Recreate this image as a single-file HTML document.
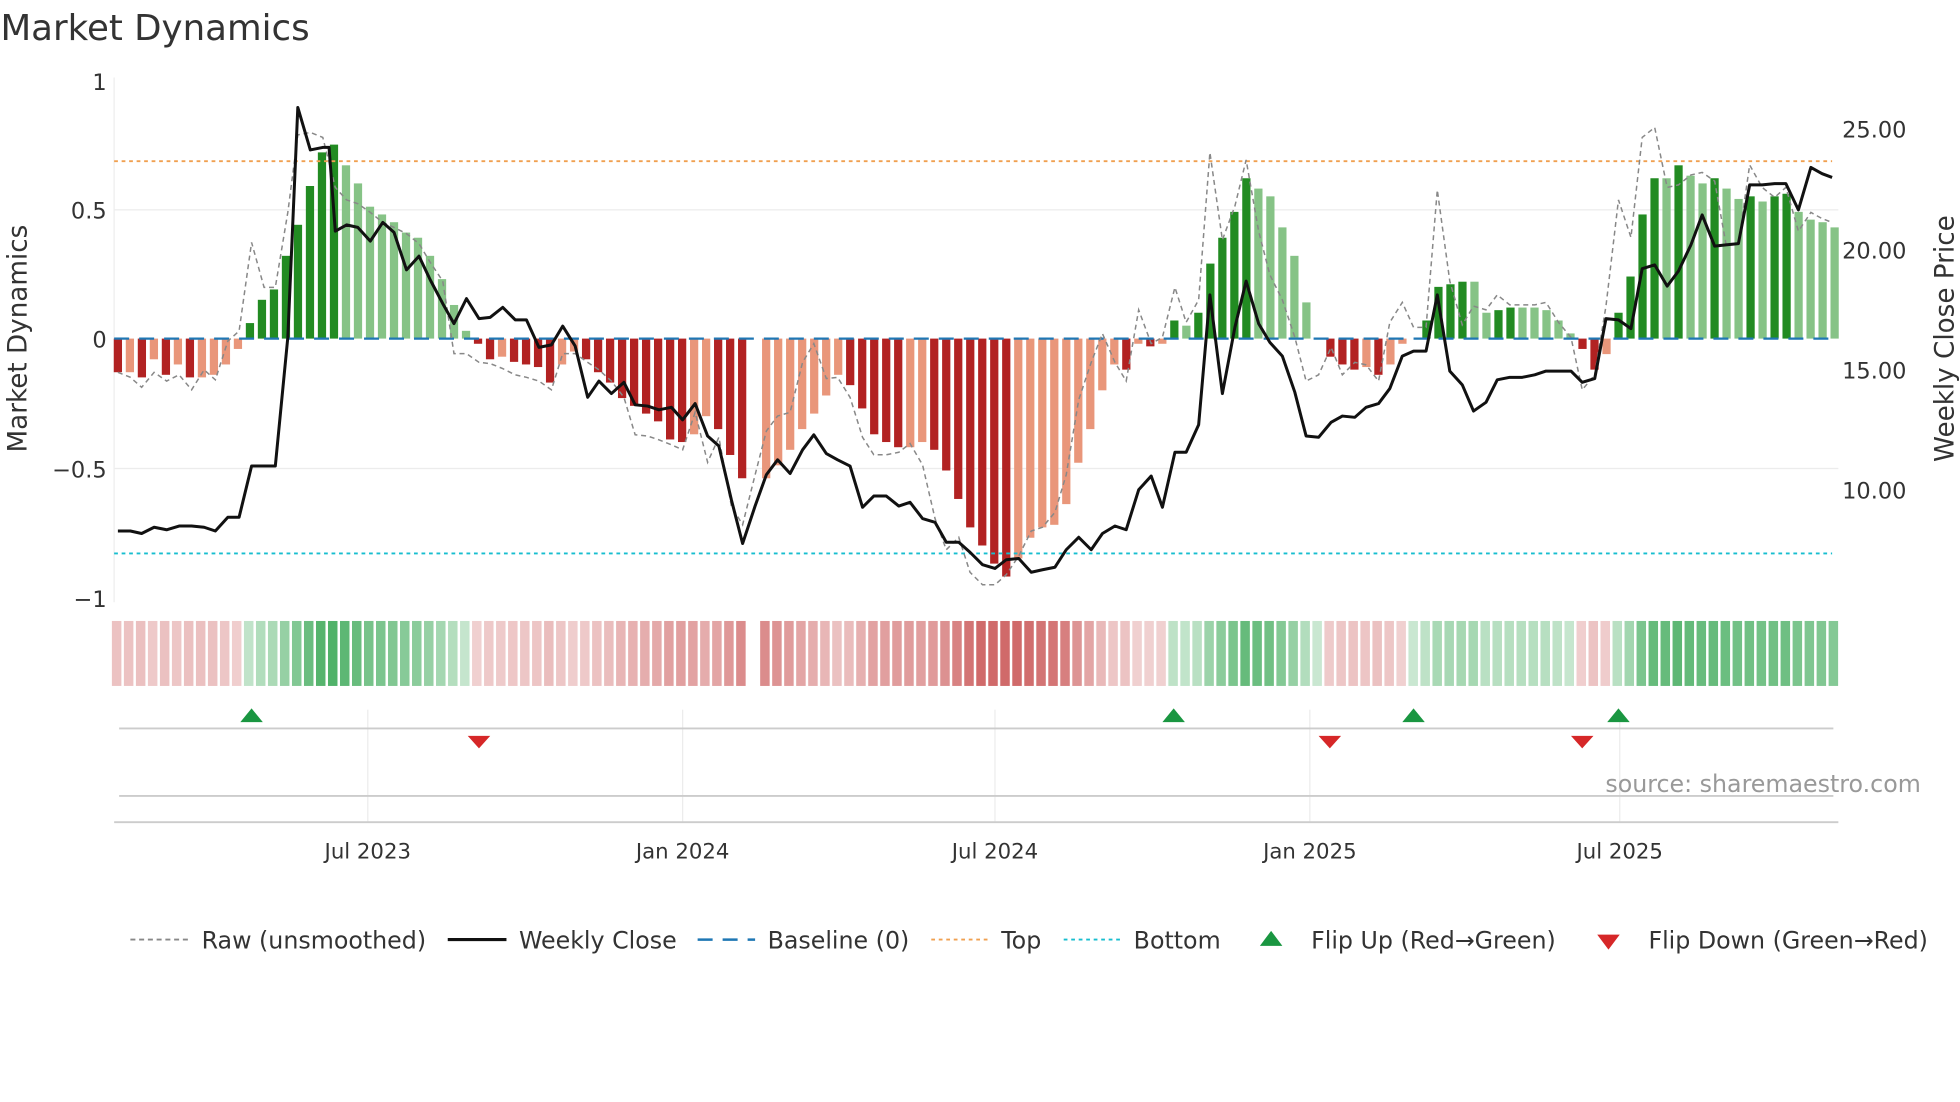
<!DOCTYPE html>
<html><head><meta charset="utf-8"><style>
html,body{margin:0;padding:0;background:#fff;}
svg{display:block;font-family:"DejaVu Sans","Liberation Sans",sans-serif;}
</style></head><body>
<svg id="s" width="1960" height="1102" viewBox="0 0 1568 882" xmlns="http://www.w3.org/2000/svg">
<rect width="1568" height="882" fill="#fff"/>
<text x="0" y="32" font-size="28.5" fill="#333">Market Dynamics</text>
<g stroke="#ececec" stroke-width="1">
<line x1="91" y1="168" x2="1471" y2="168"/><line x1="91" y1="375" x2="1471" y2="375"/>
<line x1="294" y1="568" x2="294" y2="658"/><line x1="546" y1="568" x2="546" y2="658"/><line x1="796" y1="568" x2="796" y2="658"/><line x1="1048" y1="568" x2="1048" y2="658"/><line x1="1296" y1="568" x2="1296" y2="658"/>
</g>
<line x1="91" y1="62" x2="91" y2="482" stroke="#eee"/>
<g id="bars"></g>
<g id="strip"></g>
<line x1="91" y1="271" x2="1471" y2="271" stroke="#1f77b4" stroke-width="1.8" stroke-dasharray="12,8"/>
<line x1="91" y1="129" x2="1466" y2="129" stroke="#f0a050" stroke-width="1.5" stroke-dasharray="3,3"/>
<line x1="91" y1="443" x2="1466" y2="443" stroke="#17becf" stroke-width="1.5" stroke-dasharray="3,3"/>
<path id="raw" fill="none" stroke="#888" stroke-width="1.2" stroke-dasharray="4,3"/>
<path id="px" fill="none" stroke="#111" stroke-width="2.4" stroke-linejoin="round"/>
<g font-size="18" fill="#333" text-anchor="end">
<text x="85" y="72">1</text><text x="85" y="175">0.5</text><text x="85" y="278">0</text><text x="85" y="382">−0.5</text><text x="85" y="486">−1</text>
</g>
<g font-size="18" fill="#333">
<text x="1474" y="110">25.00</text><text x="1474" y="207">20.00</text><text x="1474" y="303">15.00</text><text x="1474" y="399">10.00</text>
</g>
<text transform="translate(21,271) rotate(-90)" font-size="21" fill="#333" text-anchor="middle">Market Dynamics</text>
<text transform="translate(1563,271) rotate(-90)" font-size="21" fill="#333" text-anchor="middle">Weekly Close Price</text>
<line x1="95" y1="583" x2="1467" y2="583" stroke="#ccc" stroke-width="1.5"/>
<line x1="95" y1="637" x2="1467" y2="637" stroke="#ccc" stroke-width="1.5"/>
<line x1="91" y1="658" x2="1471" y2="658" stroke="#ccc" stroke-width="1.5"/>
<g fill="#1a9641">
<path d="M192,578 L201,567 L210,578Z"/><path d="M930,578 L939,567 L948,578Z"/><path d="M1122,578 L1131,567 L1140,578Z"/><path d="M1286,578 L1295,567 L1304,578Z"/>
</g>
<g fill="#d62728">
<path d="M374,589 L392,589 L383,599Z"/><path d="M1055,589 L1073,589 L1064,599Z"/><path d="M1257,589 L1275,589 L1266,599Z"/>
</g>
<text x="1537" y="634" font-size="19" fill="#999" text-anchor="end">source: sharemaestro.com</text>
<g font-size="17" fill="#333" text-anchor="middle">
<text x="294" y="687">Jul 2023</text><text x="546" y="687">Jan 2024</text><text x="796" y="687">Jul 2024</text><text x="1048" y="687">Jan 2025</text><text x="1296" y="687">Jul 2025</text>
</g>
<g font-size="19" fill="#333">
<line x1="104" y1="752" x2="150" y2="752" stroke="#888" stroke-width="1.5" stroke-dasharray="4,3"/>
<text x="161" y="759">Raw (unsmoothed)</text>
<line x1="358" y1="752" x2="405" y2="752" stroke="#111" stroke-width="2.5"/>
<text x="415" y="759">Weekly Close</text>
<line x1="558" y1="752" x2="604" y2="752" stroke="#1f77b4" stroke-width="2" stroke-dasharray="12,8"/>
<text x="614" y="759">Baseline (0)</text>
<line x1="745" y1="752" x2="791" y2="752" stroke="#f0a050" stroke-width="1.5" stroke-dasharray="3,3"/>
<text x="801" y="759">Top</text>
<line x1="851" y1="752" x2="897" y2="752" stroke="#17becf" stroke-width="1.5" stroke-dasharray="3,3"/>
<text x="907" y="759">Bottom</text>
<path d="M1008,757 L1017,745 L1026,757Z" fill="#1a9641"/>
<text x="1049" y="759">Flip Up (Red→Green)</text>
<path d="M1278,748 L1296,748 L1287,760Z" fill="#d62728"/>
<text x="1319" y="759">Flip Down (Green→Red)</text>
</g>
</svg>
<script>
var V=[-0.13,-0.13,-0.15,-0.08,-0.14,-0.1,-0.15,-0.15,-0.14,-0.1,-0.04,0.06,0.15,0.19,0.32,0.44,0.59,0.72,0.75,0.67,0.6,0.51,0.48,0.45,0.41,0.39,0.32,0.23,0.13,0.03,-0.02,-0.08,-0.07,-0.09,-0.1,-0.11,-0.17,-0.1,-0.05,-0.08,-0.13,-0.17,-0.23,-0.26,-0.29,-0.32,-0.39,-0.4,-0.37,-0.3,-0.35,-0.45,-0.54,null,-0.54,-0.49,-0.43,-0.35,-0.29,-0.22,-0.14,-0.18,-0.27,-0.37,-0.4,-0.42,-0.42,-0.4,-0.43,-0.51,-0.62,-0.73,-0.8,-0.87,-0.92,-0.85,-0.77,-0.73,-0.72,-0.64,-0.48,-0.35,-0.2,-0.1,-0.12,-0.02,-0.03,-0.02,0.07,0.05,0.1,0.29,0.39,0.49,0.62,0.58,0.55,0.43,0.32,0.14,0,-0.07,-0.1,-0.12,-0.11,-0.14,-0.1,-0.02,0,0.07,0.2,0.21,0.22,0.22,0.1,0.11,0.12,0.12,0.12,0.11,0.07,0.02,-0.04,-0.12,-0.06,0.1,0.24,0.48,0.62,0.62,0.67,0.63,0.6,0.62,0.58,0.54,0.55,0.53,0.55,0.56,0.49,0.46,0.45,0.43];
var n=V.length,x0=94,x1=1468,st=(x1-x0)/(n-1),b="",s="",prev=0;
for(var i=0;i<n;i++){var v=V[i];if(v===null){continue;}var x=x0+i*st,y=271-v*207;
var c;if(v>=0)c=(v>prev)?"#228b22":"#86c386";else c=(v<prev)?"#b22222":"#e9967a";prev=v;
b+='<rect x="'+(x-3.3)+'" y="'+Math.min(y,271)+'" width="6.6" height="'+Math.abs(271-y)+'" fill="'+c+'"/>';
var a=0.25+0.6*Math.min(1,Math.abs(v)/0.8);var col=v>=0?"rgba(40,160,70,"+a+")":"rgba(200,80,80,"+a+")";
s+='<rect x="'+(x-4.8)+'" y="497" width="7.6" height="52" fill="'+col+'"/>';}
document.getElementById("bars").innerHTML=b;document.getElementById("strip").innerHTML=s;
var P="94,425 104,425 113,427 123,422 133,424 143,421 153,421 163,422 172,425 182,414 191,414 201,373 211,373 220,373 230,270 238,86 248,120 258,118 263,118 268,185 277,180 286,182 296,193 306,178 315,186 325,216 335,205 344,224 354,243 363,259 373,239 383,255 392,254 402,246 412,256 421,256 431,278 441,276 450,261 460,277 470,318 479,305 489,315 499,306 508,324 518,325 527,328 537,326 546,336 556,323 566,349 575,357 585,400 594,435 604,405 613,380 622,368 632,379 642,360 651,348 661,363 670,368 680,373 690,406 699,397 709,397 719,405 728,402 738,415 748,418 757,434 767,434 776,442 786,452 796,455 805,448 815,447 825,458 834,456 844,454 853,440 863,430 873,440 882,427 892,421 901,424 911,392 921,381 930,406 940,362 949,362 959,340 968,236 978,315 988,262 997,225 1007,259 1016,274 1026,285 1036,314 1045,349 1055,350 1065,338 1074,333 1084,334 1093,326 1103,323 1112,311 1122,285 1131,281 1141,281 1150,236 1160,297 1170,308 1179,329 1189,322 1198,304 1208,302 1218,302 1228,300 1237,297 1247,297 1257,297 1266,306 1276,303 1285,255 1295,256 1305,263 1314,215 1324,212 1334,229 1343,217 1353,196 1362,172 1372,197 1381,196 1391,195 1400,148 1410,148 1420,147 1429,147 1439,168 1449,134 1458,139 1466,142";
var R="94,298 104,302 113,310 123,298 133,305 143,300 153,312 163,296 172,304 182,273 191,265 201,194 211,230 220,230 230,170 238,108 248,106 258,110 268,150 277,160 286,163 296,170 306,178 315,182 325,187 335,195 344,210 354,225 363,283 373,283 383,290 392,291 402,295 412,300 421,302 431,305 441,312 450,283 460,283 470,290 479,296 489,305 499,318 508,348 518,349 527,352 537,356 546,360 556,330 566,370 575,350 585,405 594,420 604,380 613,345 622,333 632,330 642,290 651,275 661,303 670,302 680,318 690,350 699,364 709,364 719,362 728,355 738,372 748,415 757,440 767,430 776,458 786,468 796,468 805,460 815,445 825,425 834,422 844,410 853,380 863,320 873,290 882,267 892,290 901,305 911,248 921,275 930,270 940,230 949,258 959,240 968,122 978,192 988,165 997,128 1007,185 1016,220 1026,240 1036,270 1045,305 1055,300 1065,278 1074,300 1084,290 1093,292 1103,305 1112,258 1122,242 1131,262 1141,262 1150,152 1160,225 1170,260 1179,245 1189,248 1198,236 1208,244 1218,244 1228,244 1237,242 1247,258 1257,270 1266,312 1276,300 1285,245 1295,160 1305,190 1314,110 1324,102 1334,150 1343,148 1353,140 1362,138 1372,145 1381,195 1391,195 1400,132 1410,150 1420,158 1429,150 1439,185 1449,170 1458,175 1466,178";
document.getElementById("px").setAttribute("d","M"+P.split(" ").join(" L"));
document.getElementById("raw").setAttribute("d","M"+R.split(" ").join(" L"));
</script>
</body></html>
